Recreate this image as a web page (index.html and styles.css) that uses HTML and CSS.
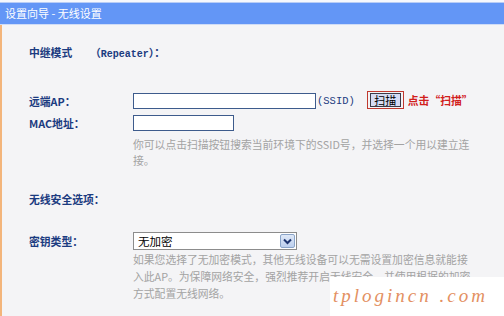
FILE: index.html
```html
<!DOCTYPE html>
<html lang="zh-CN">
<head>
<meta charset="utf-8">
<title>设置向导 - 无线设置</title>
<link rel="stylesheet" href="styles.css">
</head>
<body>
<div class="page">
  <div class="topline"></div>
  <div class="header">设置向导 - 无线设置</div>
  <div class="main">
    <div class="row row-mode">
      <span class="label mode-label">中继模式</span>
      <span class="label">（<span class="mono">Repeater</span>）：</span>
    </div>

    <div class="row row-ap">
      <span class="label col">远端AP：</span>
      <span class="input input-ssid"></span>
      <span class="ssid">(SSID)</span>
      <span class="scan-frame"><span class="scan-btn">扫描</span></span>
      <span class="scan-note">点击“扫描”</span>
    </div>

    <div class="row row-mac">
      <span class="label col">MAC地址：</span>
      <span class="input input-mac"></span>
    </div>

    <div class="hint hint-scan">
      <div>你可以点击扫描按钮搜索当前环境下的SSID号，并选择一个用以建立连</div>
      <div>接。</div>
    </div>

    <div class="row row-sec">
      <span class="label">无线安全选项：</span>
    </div>

    <div class="row row-key">
      <span class="label col">密钥类型：</span>
      <span class="select">
        <span class="select-text">无加密</span>
        <span class="select-arrow">
          <svg width="9" height="7" viewBox="0 0 9 7"><path d="M1 1.5 L4.5 5 L8 1.5" fill="none" stroke="#1e3570" stroke-width="2"/></svg>
        </span>
      </span>
    </div>

    <div class="hint hint-key">
      <div>如果您选择了无加密模式，其他无线设备可以无需设置加密信息就能接</div>
      <div>入此AP。为保障网络安全，强烈推荐开启无线安全，并使用根据的加密</div>
      <div>方式配置无线网络。</div>
    </div>
  </div>
  <div class="watermark">tplogincn .com</div>
</div>
</body>
</html>
```

FILE: styles.css
```css
html, body {
  margin: 0;
  padding: 0;
}
body {
  width: 504px;
  height: 316px;
  overflow: hidden;
  background: #f4f4f6;
  font-family: "Noto Sans CJK SC", "Liberation Sans", sans-serif;
}
.page {
  position: relative;
  width: 504px;
  height: 316px;
  display: flex;
  flex-direction: column;
  background: #f4f4f6;
}
.topline {
  height: 3px;
  background: #f6f8fd;
  border-bottom: 1px solid #b9cdf6;
  box-sizing: border-box;
}
.header {
  height: 21px;
  background: #6396f6;
  color: #ffffff;
  font-size: 11px;
  line-height: 21px;
  padding-left: 5px;
  border-bottom: 1px solid #cfdcf6;
}
.main {
  flex: 1;
  border-left: 2px solid #f3b57b;
  padding-left: 27px;
  display: flex;
  flex-direction: column;
}
.row {
  display: flex;
  align-items: center;
  height: 18px;
}
.label {
  color: #1b3b80;
  font-size: 10.8px;
  font-weight: bold;
  white-space: nowrap;
}
.col {
  width: 104px;
  flex: none;
}
.mode-label {
  width: 61px;
}
.mono {
  font-family: "Liberation Mono", monospace;
  font-size: 10px;
}
.row-mode { margin-top: 18px; }
.row-ap { margin-top: 30px; height: 20px; }
.row-mac { margin-top: 3px; }
.row-sec { margin-top: 22px; }
.row-key { margin-top: 24px; }

.input {
  display: block;
  height: 16px;
  box-sizing: border-box;
  background: #ffffff;
  border: 1px solid #3d5b8c;
}
.input-ssid { width: 183px; }
.input-mac { width: 101px; }
.ssid {
  color: #1b3b80;
  font-family: "Liberation Mono", monospace;
  font-size: 10.5px;
  margin-left: 1px;
}
.scan-frame {
  display: flex;
  align-items: center;
  justify-content: center;
  margin-left: 12px;
  width: 37px;
  height: 18px;
  box-sizing: border-box;
  border: 1px solid #c0392f;
  margin-top: -3px;
}
.scan-btn {
  display: block;
  width: 31px;
  height: 14px;
  box-sizing: border-box;
  border: 1px solid #3a3a48;
  background: #d5dbf3;
  color: #000000;
  font-size: 11px;
  line-height: 12px;
  text-align: center;
}
.scan-note {
  color: #d1201c;
  font-size: 10.8px;
  font-weight: bold;
  margin-left: 4px;
  margin-top: -3px;
}
.hint {
  color: #a3a3a3;
  font-size: 10.8px;
  white-space: nowrap;
  padding-left: 104px;
}
.hint-scan {
  margin-top: 4px;
  line-height: 16px;
}
.hint-key {
  margin-top: 1px;
  line-height: 17px;
}
.select {
  display: flex;
  align-items: center;
  width: 164px;
  height: 18px;
  box-sizing: border-box;
  border: 1px solid #8c8c8c;
  background: #ffffff;
  padding-left: 4px;
  padding-right: 1px;
}
.select-text {
  flex: 1;
  color: #000000;
  font-size: 11.5px;
}
.select-arrow {
  display: flex;
  align-items: center;
  justify-content: center;
  width: 15px;
  height: 14px;
  box-sizing: border-box;
  border: 1px solid #8aa4c8;
  background: linear-gradient(#dfe8f7, #bccfee);
  border-radius: 2px;
}
.watermark {
  position: absolute;
  left: 330px;
  top: 277px;
  right: 0;
  bottom: 0;
  background: #ffffff;
  color: #e39062;
  font-family: "Liberation Serif", serif;
  font-style: italic;
  font-size: 19px;
  letter-spacing: 3px;
  line-height: 20px;
  padding-top: 9px;
  padding-left: 3px;
  white-space: nowrap;
}
```
